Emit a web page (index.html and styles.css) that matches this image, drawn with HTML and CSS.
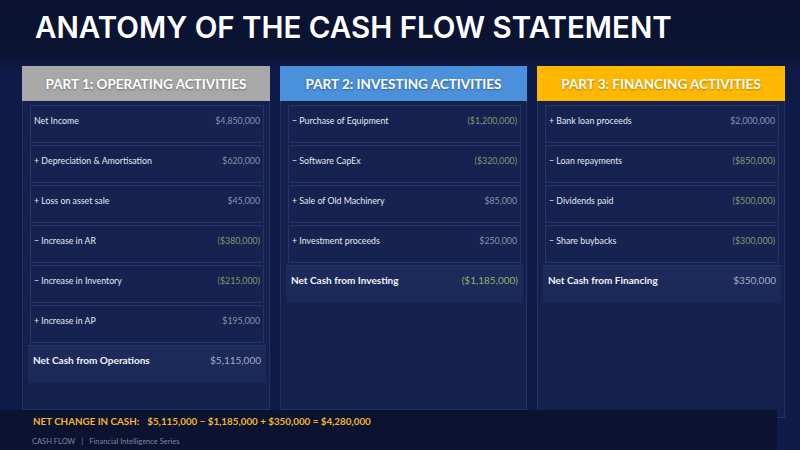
FILE: index.html
```html
<!DOCTYPE html>
<html lang="en">
<head>
<meta charset="utf-8">
<title>Anatomy of the Cash Flow Statement</title>
<link rel="stylesheet" href="styles.css">
</head>
<body>
<div class="slide">
  <h1 class="title">ANATOMY OF THE CASH FLOW STATEMENT</h1>
  <div class="columns">
    <section class="col">
      <div class="head head-gray">PART 1: OPERATING ACTIVITIES</div>
      <div class="body">
        <div class="row"><span class="lbl">Net Income</span><span class="val">$4,850,000</span></div>
        <div class="row"><span class="lbl">+ Depreciation &amp; Amortisation</span><span class="val">$620,000</span></div>
        <div class="row"><span class="lbl">+ Loss on asset sale</span><span class="val">$45,000</span></div>
        <div class="row"><span class="lbl">− Increase in AR</span><span class="val neg">($380,000)</span></div>
        <div class="row"><span class="lbl">− Increase in Inventory</span><span class="val neg">($215,000)</span></div>
        <div class="row"><span class="lbl">+ Increase in AP</span><span class="val">$195,000</span></div>
        <div class="total"><span class="lbl">Net Cash from Operations</span><span class="val">$5,115,000</span></div>
      </div>
    </section>
    <section class="col">
      <div class="head head-blue">PART 2: INVESTING ACTIVITIES</div>
      <div class="body">
        <div class="row"><span class="lbl">− Purchase of Equipment</span><span class="val neg">($1,200,000)</span></div>
        <div class="row"><span class="lbl">− Software CapEx</span><span class="val neg">($320,000)</span></div>
        <div class="row"><span class="lbl">+ Sale of Old Machinery</span><span class="val">$85,000</span></div>
        <div class="row"><span class="lbl">+ Investment proceeds</span><span class="val">$250,000</span></div>
        <div class="total"><span class="lbl">Net Cash from Investing</span><span class="val neg-strong">($1,185,000)</span></div>
      </div>
    </section>
    <section class="col col-last">
      <div class="head head-amber">PART 3: FINANCING ACTIVITIES</div>
      <div class="body">
        <div class="row"><span class="lbl">+ Bank loan proceeds</span><span class="val">$2,000,000</span></div>
        <div class="row"><span class="lbl">− Loan repayments</span><span class="val neg">($850,000)</span></div>
        <div class="row"><span class="lbl">− Dividends paid</span><span class="val neg">($500,000)</span></div>
        <div class="row"><span class="lbl">− Share buybacks</span><span class="val neg">($300,000)</span></div>
        <div class="total"><span class="lbl">Net Cash from Financing</span><span class="val">$350,000</span></div>
      </div>
    </section>
  </div>
  <footer class="footer">
    <div class="net"><span class="net-lbl">NET CHANGE IN CASH:</span><span class="net-eq">$5,115,000 − $1,185,000 + $350,000 = $4,280,000</span></div>
    <div class="series"><span>CASH FLOW</span><span class="sep">|</span><span>Financial Intelligence Series</span></div>
  </footer>
</div>
</body>
</html>
```
FILE: styles.css
```css
html, body {
  margin: 0;
  padding: 0;
}
body {
  width: 800px;
  height: 450px;
  overflow: hidden;
  background: #0e1a45;
  font-family: "Lato", "Liberation Sans", sans-serif;
}
.slide {
  width: 800px;
  height: 450px;
  display: flex;
  flex-direction: column;
  background: linear-gradient(180deg, #0a1230 0px, #0b1433 56px, #0f1b48 70px, #0f1c4a 100%);
}
.title {
  margin: 0;
  height: 57px;
  flex: none;
  padding: 8px 0 0 35px;
  box-sizing: border-box;
  font-family: "Inter", "Liberation Sans", sans-serif;
  font-weight: 600;
  font-size: 29.5px;
  line-height: 38px;
  color: #ffffff;
}
.columns {
  display: grid;
  grid-template-columns: 248px 247px 248px;
  column-gap: 10px;
  padding: 9px 0 0 22px;
  height: 353px;
  flex: none;
  box-sizing: border-box;
}
.col {
  display: flex;
  flex-direction: column;
  height: 344px;
}
.col-last {
  height: 352px;
}
.head {
  height: 35px;
  flex: none;
  display: flex;
  align-items: center;
  justify-content: center;
  font-weight: 700;
  font-size: 13.5px;
  color: #ffffff;
  text-shadow: 0 1px 2px rgba(0,0,0,0.35);
}
.head-gray { background: #a8a8a8; }
.head-blue { background: #4a90da; }
.head-amber { background: #ffb700; }
.body {
  flex: 1;
  background: #15214d;
  border: 1px solid #243262;
  border-top: none;
  padding: 4px 5px 0 7px;
  display: flex;
  flex-direction: column;
  gap: 2px;
}
.row {
  height: 38px;
  flex: none;
  box-sizing: border-box;
  border: 1px solid #24336a;
  background: #162350;
  display: flex;
  justify-content: space-between;
  align-items: flex-start;
  padding: 9px 3px 0 3px;
  font-size: 8.8px;
  line-height: 11px;
}
.lbl {
  color: #e4e8f3;
}
.val {
  color: #8790ad;
}
.neg {
  color: #87956f;
}
.neg-strong {
  color: #8fb06c;
}
.total {
  height: 38px;
  flex: none;
  box-sizing: border-box;
  margin: 0 -2px 0 -2px;
  background: linear-gradient(180deg, #1d2b5c 0%, #1b2958 100%);
  border-top: 1px solid #26366c;
  display: flex;
  justify-content: space-between;
  align-items: flex-start;
  padding: 8px 5px 0 5px;
  font-size: 10px;
  line-height: 13px;
}
.total .lbl {
  font-weight: 700;
  color: #f1f3f9;
}
.total .val {
  color: #a3abc4;
}
.total .neg-strong {
  color: #8fb06c;
}
.footer {
  flex: 1;
  width: 777px;
  background: #0b1330;
  padding: 5px 0 0 33px;
  box-sizing: border-box;
  position: relative;
  z-index: 1;
}
.net {
  font-weight: 700;
  font-size: 9.8px;
  line-height: 12px;
  color: #f2b430;
}
.net-lbl {
  margin-right: 8px;
}
.series {
  margin-top: 10px;
  font-size: 7.5px;
  line-height: 9px;
  color: #7d86a2;
  margin-left: -1px;
  display: flex;
}
.sep {
  margin: 0 6px 0 6px;
}
```
